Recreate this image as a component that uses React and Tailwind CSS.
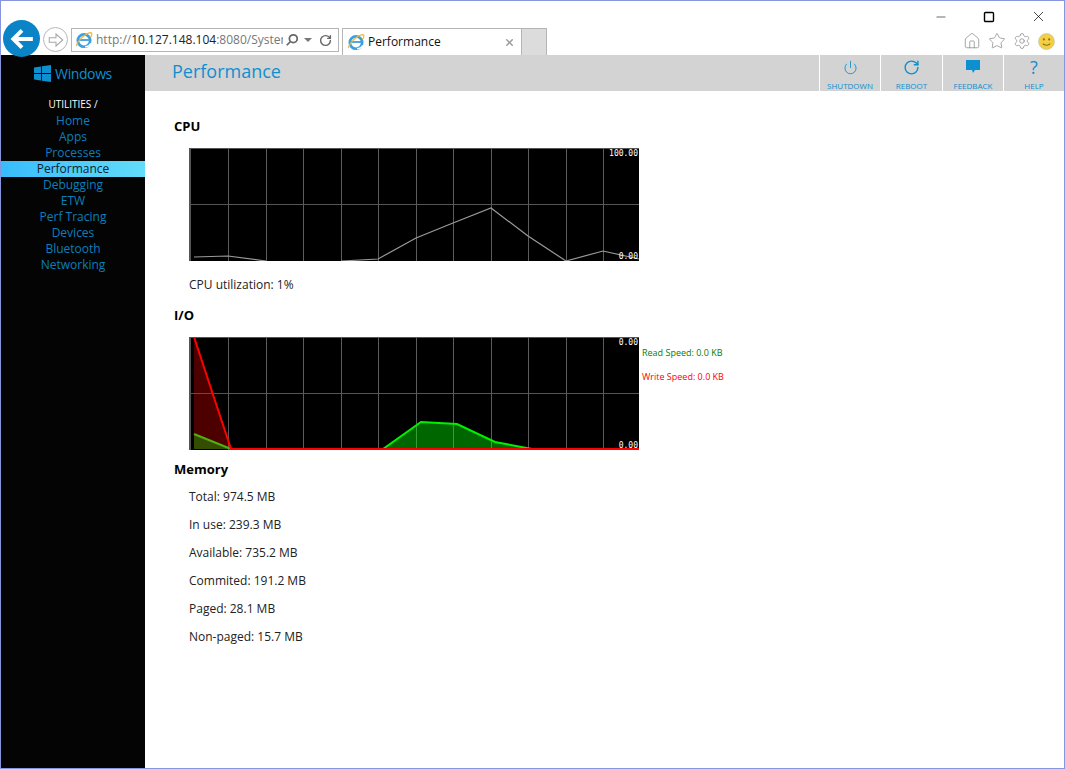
import React from 'react';
import { Power, RotateCw, House, Star, Settings, Minus, Square, X } from 'lucide-react';

const FONT = "font-['Open_Sans','Noto_Sans',sans-serif]";
const navItems = ['Home', 'Apps', 'Processes', 'Performance', 'Debugging', 'ETW', 'Perf Tracing', 'Devices', 'Bluetooth', 'Networking'];
const memory = ['Total: 974.5 MB', 'In use: 239.3 MB', 'Available: 735.2 MB', 'Commited: 191.2 MB', 'Paged: 28.1 MB', 'Non-paged: 15.7 MB'];
const gridX = [39, 77, 114, 152, 189, 227, 264, 302, 339, 377, 414, 452];

const IeLogo = ({ className }) => (
    <svg viewBox="0 0 16 16" className={className}>
        <circle cx="8" cy="8.5" r="5.5" fill="none" stroke="#3b9fe0" strokeWidth="2.4" />
        <path d="M3.5 8h9" stroke="#3b9fe0" strokeWidth="1.6" />
        <path d="M9 14c3 0 4-1 5-3" stroke="#fff" strokeWidth="1.2" fill="none" />
        <path d="M1.5 13.5C1 10 9 2 14 1.5c1.5 0 1 2.5 0 4" stroke="#f2b632" strokeWidth="1.1" fill="none" />
    </svg>
);

const Graph = ({ children, top, bottom }) => (
    <div className="w-[450px] h-[113px] bg-black relative">
        <svg viewBox="0 0 450 113" className="w-[450px] h-[113px] block">
            <path d="M0.5 0V113M1.5 0V113M0 0.5H450" stroke="#555" fill="none" />
            <path d="M0 56.5H450" stroke="#555" fill="none" />
            {gridX.map(x => (
                <path key={x} d={`M${x + 0.5} 0V113`} stroke="#5c5c5c" fill="none" />
            ))}
            {children}
        </svg>
        <span className="absolute right-[1px] top-[1px] font-['DejaVu_Sans_Mono',monospace] text-[8px] leading-[10px] text-white">{top}</span>
        <span className="absolute right-[1px] bottom-[-1px] font-['DejaVu_Sans_Mono',monospace] text-[8px] leading-[10px] text-white">{bottom}</span>
    </div>
);

const ToolButton = ({ icon, label, width }) => (
    <div className={`${width} h-full border-l border-white flex flex-col items-center`}>
        <div className="h-[22px] mt-[2px] flex items-center justify-center text-[#0e8fd0]">{icon}</div>
        <span className="mt-[4px] text-[8px] leading-[10px] text-[#0e8fd0]">{label}</span>
    </div>
);

const App = () => {
    return (
        <div className={`w-[1065px] h-[769px] bg-white border border-[#8596de] border-b-[#8596de] flex flex-col overflow-hidden ${FONT}`}>
            {/* browser chrome */}
            <div className="h-[54px] flex shrink-0 relative">
                <div className="flex items-end pl-[1px] pb-[-2px] flex-1">
                    <div className="w-[37px] h-[37px] rounded-full bg-[#0a84c6] flex items-center justify-center mb-[-2px] ml-[1px]">
                        <svg viewBox="0 0 24 24" className="w-[26px] h-[26px]" fill="none" stroke="#fff" strokeWidth="3.6">
                            <path d="M22 12H4M12 4l-8 8 8 8" />
                        </svg>
                    </div>
                    <div className="w-[25px] h-[25px] ml-[3px] mb-[3px] rounded-full border border-[#b8b8b8] flex items-center justify-center">
                        <svg viewBox="0 0 24 24" className="w-[18px] h-[18px]" fill="#fff" stroke="#a8a8a8" strokeWidth="1.4">
                            <path d="M3 9h9V4l9 8-9 8v-5H3z" />
                        </svg>
                    </div>
                    <div className="w-[268px] h-[24px] ml-[3px] mb-[3px] border border-[#b5b5b5] flex items-center pl-[3px] text-[12px]">
                        <IeLogo className="w-[18px] h-[18px] shrink-0" />
                        <span className="ml-[3px] w-[187px] whitespace-nowrap overflow-hidden text-[#777]">http://<span className="text-[#222]">10.127.148.104</span>:8080/SystemP</span>
                        <svg viewBox="0 0 16 16" className="w-[14px] h-[14px] ml-[2px] shrink-0" fill="none" stroke="#666" strokeWidth="2">
                            <circle cx="9.5" cy="6.5" r="4.5" />
                            <path d="M6 10l-4 4" />
                        </svg>
                        <svg viewBox="0 0 8 4" className="w-[8px] h-[4px] ml-[5px] shrink-0"><path d="M0 0h8L4 4z" fill="#777" /></svg>
                        <RotateCw size={13} strokeWidth={2.6} color="#666" className="ml-[7px] shrink-0" />
                    </div>
                    <div className="w-[180px] h-[27px] ml-[3px] border border-b-0 border-[#b5b5b5] flex items-center pl-[4px] text-[12px] text-[#111]">
                        <IeLogo className="w-[18px] h-[18px] shrink-0" />
                        <span className="ml-[3px] flex-1">Performance</span>
                        <X size={11} strokeWidth={3} color="#999" className="mr-[6px] shrink-0" />
                    </div>
                    <div className="w-[25px] h-[27px] bg-[#dcdcdc] border border-l-0 border-b-0 border-[#b5b5b5]"></div>
                </div>
                {/* window buttons and tools */}
                <div className="flex flex-col items-end pr-[9px] pt-[7px] shrink-0">
                    <div className="flex items-center gap-[35px] pr-[8px] text-black">
                        <Minus size={14} strokeWidth={1} />
                        <Square size={12} strokeWidth={1.4} absoluteStrokeWidth />
                        <X size={17} strokeWidth={1} />
                    </div>
                    <div className="flex items-center gap-[7px] mt-[7px]">
                        <House size={18} strokeWidth={1} color="#888" />
                        <Star size={18} strokeWidth={1} color="#888" />
                        <Settings size={18} strokeWidth={1} color="#888" />
                        <svg viewBox="0 0 16 16" className="w-[17px] h-[17px]">
                            <circle cx="8" cy="8" r="7.5" fill="#f4cf45" stroke="#c9c9a0" strokeWidth="0.7" />
                            <circle cx="5.5" cy="6" r="1" fill="#8a6d12" />
                            <circle cx="10.5" cy="6" r="1" fill="#8a6d12" />
                            <path d="M4.5 10c1.5 2 5.5 2 7 0" stroke="#8a6d12" fill="none" />
                        </svg>
                    </div>
                </div>
            </div>

            <div className="flex flex-1 min-h-0">
                {/* sidebar */}
                <div className="w-[144px] bg-[#040404] shrink-0 flex flex-col items-center">
                    <div className="h-[36px] flex items-center justify-center gap-[4px] text-[#0e8fd0] text-[14px] tracking-[-0.4px]">
                        <svg viewBox="0 0 18 18" className="w-[17px] h-[17px]" fill="#0e8fd0">
                            <path d="M0 2.6l7.4-1v7H0zM8.3 1.4L18 0v8.6H8.3zM0 9.4h7.4v7L0 15.4zM8.3 9.4H18V18l-9.7-1.4z" />
                        </svg>
                        Windows
                    </div>
                    <div className="mt-[6px] h-[14px] leading-[14px] text-[10px] text-white">UTILITIES /</div>
                    <div className="w-full mt-[2px]">
                        {navItems.map(item => (
                            <div
                                key={item}
                                className={`h-[16px] leading-[16px] text-center text-[12px] ${item === 'Performance' ? 'bg-gradient-to-r from-[#37bcfd] to-[#62dcf9] text-[#12222c]' : 'text-[#0a7fbb]'}`}
                            >
                                {item}
                            </div>
                        ))}
                    </div>
                </div>

                <div className="flex-1 flex flex-col min-w-0">
                    {/* title bar */}
                    <div className="h-[36px] bg-[#d3d3d3] flex shrink-0">
                        <div className="flex-1 pl-[27px] text-[18px] leading-[32px] text-[#0e8fd0]">Performance</div>
                        <ToolButton width="w-[61px]" label="SHUTDOWN" icon={<Power size={15} strokeWidth={1.4} />} />
                        <ToolButton width="w-[62px]" label="REBOOT" icon={<RotateCw size={17} strokeWidth={2} />} />
                        <ToolButton width="w-[61px]" label="FEEDBACK" icon={
                            <svg viewBox="0 0 16 16" className="w-[16px] h-[16px]" fill="#0e8fd0"><path d="M1 1h14v10h-5l-2 3-1-3H1z" /></svg>
                        } />
                        <ToolButton width="w-[61px]" label="HELP" icon={<span className="text-[18px] leading-[20px]">?</span>} />
                    </div>

                    {/* content */}
                    <div className="flex-1 pl-[29px] text-[12px] text-[#222]">
                        <h2 className="mt-[27px] text-[13px] leading-[16px] font-bold text-black">CPU</h2>
                        <div className="mt-[14px] ml-[15px]">
                            <Graph top="100.00" bottom="0.00">
                                <polyline points="5,109 39,108 77,113" fill="none" stroke="#9a9a9a" strokeWidth="1.2" />
                                <polyline points="152,113 189,111 227,90 264,75 302,60 339,88 377,113 414,103 450,111" fill="none" stroke="#9a9a9a" strokeWidth="1.2" />
                            </Graph>
                            <p className="mt-[15px] leading-[18px]">CPU utilization: 1%</p>
                        </div>
                        <h2 className="mt-[13px] text-[13px] leading-[16px] font-bold text-black">I/O</h2>
                        <div className="mt-[14px] ml-[15px] flex">
                            <Graph top="0.00" bottom="0.00">
                                <polygon points="5,0 42,112 5,112" fill="#ff0000" fillOpacity="0.3" />
                                <polygon points="5,97 42,112 5,112" fill="#00ff00" fillOpacity="0.3" />
                                <polygon points="194,112 232,85 268,87 306,105 343,112" fill="#00ff00" fillOpacity="0.4" />
                                <polyline points="5,97 42,112" fill="none" stroke="#4fb010" strokeWidth="2" />
                                <polyline points="42,112 194,112 232,85 268,87 306,105 343,112 450,112" fill="none" stroke="#00f000" strokeWidth="2" />
                                <polyline points="5,0 42,112 450,112" fill="none" stroke="#ff0000" strokeWidth="2" />
                            </Graph>
                            <div className="ml-[3px] text-[9px] leading-[12px]">
                                <p className="mt-[10px] text-[#008000]">Read Speed: 0.0 KB</p>
                                <p className="mt-[12px] text-[#ff0000]">Write Speed: 0.0 KB</p>
                            </div>
                        </div>
                        <h2 className="mt-[11px] text-[13px] leading-[16px] font-bold text-black">Memory</h2>
                        <div className="ml-[15px] mt-[6px]">
                            {memory.map(row => (
                                <p key={row} className="h-[28px] leading-[28px]">{row}</p>
                            ))}
                        </div>
                    </div>
                </div>
            </div>
        </div>
    );
};

export default App;
